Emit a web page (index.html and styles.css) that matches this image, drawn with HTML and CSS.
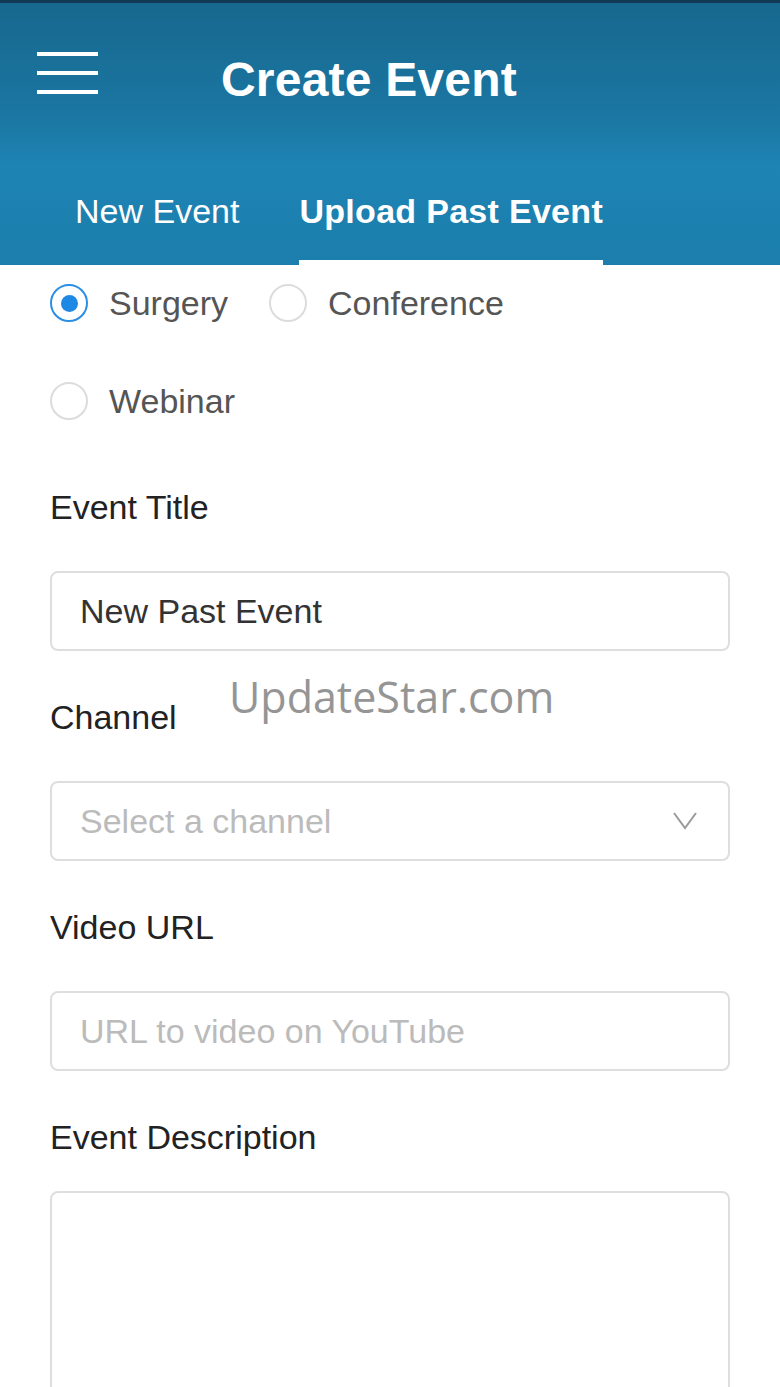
FILE: index.html
```html
<!DOCTYPE html>
<html lang="en">
<head>
    <meta charset="UTF-8">
    <meta name="viewport" content="width=device-width, initial-scale=1.0">
    <title>Create Event</title>
    <link rel="stylesheet" href="styles.css">
</head>
<body>
    <div class="header">
        <div class="title-bar">
            <div class="menu-icon">
                <span></span>
                <span></span>
                <span></span>
            </div>
            <h1 class="title">Create Event</h1>
        </div>
        <div class="tabs">
            <a href="#" class="tab">New Event</a>
            <a href="#" class="tab active">Upload Past Event</a>
        </div>
    </div>

    <div class="form">
        <div class="radio-group">
            <label class="radio-item">
                <span class="radio checked"></span>
                <span>Surgery</span>
            </label>
            <label class="radio-item">
                <span class="radio"></span>
                <span>Conference</span>
            </label>
            <label class="radio-item">
                <span class="radio"></span>
                <span>Webinar</span>
            </label>
        </div>

        <div class="field">
            <div class="field-label">Event Title</div>
            <div class="input">New Past Event</div>
        </div>

        <div class="field">
            <div class="field-label">Channel</div>
            <div class="input select">
                <span class="placeholder">Select a channel</span>
                <svg class="chevron" width="24" height="18" viewBox="0 0 24 18">
                    <path d="M1 1 L12 16 L23 1" fill="none" stroke="#9a9a9a" stroke-width="2"/>
                </svg>
            </div>
        </div>

        <div class="field">
            <div class="field-label">Video URL</div>
            <div class="input"><span class="placeholder">URL to video on YouTube</span></div>
        </div>

        <div class="field">
            <div class="field-label short">Event Description</div>
            <div class="input textarea"></div>
        </div>

        <div class="watermark">UpdateStar.com</div>
    </div>
</body>
</html>
```

FILE: styles.css
```css
body {
    font-family: 'Liberation Sans', Arial, sans-serif;
    margin: 0;
    padding: 0;
    background-color: #fff;
    height: 1387px;
    overflow: hidden;
}

/* Barra superior con degradado */
.header {
    height: 265px;
    border-top: 3px solid #123a55;
    box-sizing: border-box;
    background: linear-gradient(to bottom, #17688e 0%, #1b77a3 45%, #1e84b4 62%, #1b7eac 100%);
    color: #fff;
    display: flex;
    flex-direction: column;
}

.title-bar {
    display: flex;
    align-items: center;
    height: 152px;
    padding-left: 37px;
    box-sizing: border-box;
    padding-bottom: 0;
}

.menu-icon {
    display: flex;
    flex-direction: column;
    gap: 15px;
    width: 61px;
    margin-top: -12px;
}

.menu-icon span {
    display: block;
    height: 4px;
    background-color: #fff;
}

.title {
    margin: 0 0 0 123px;
    font-size: 48px;
    font-weight: bold;
    letter-spacing: 0.2px;
}

.tabs {
    display: flex;
    padding-left: 75px;
    gap: 60px;
    height: 110px;
    align-items: flex-end;
}

.tab {
    color: #fff;
    text-decoration: none;
    font-size: 34px;
    padding-bottom: 29px;
    border-bottom: 5px solid transparent;
    line-height: 40px;
}

.tab.active {
    font-weight: bold;
    letter-spacing: 0.3px;
    border-bottom-color: #fff;
}

/* Formulario */
.form {
    position: relative;
    padding: 9px 50px 0 50px;
}

.radio-group {
    display: flex;
    flex-wrap: wrap;
    column-gap: 41px;
    row-gap: 40px;
    max-width: 560px;
}

.radio-item {
    display: flex;
    align-items: center;
    gap: 21px;
    height: 58px;
    font-size: 34px;
    color: #555;
}

.radio {
    width: 34px;
    height: 34px;
    border: 2px solid #dcdcdc;
    border-radius: 50%;
    display: flex;
    align-items: center;
    justify-content: center;
}

.radio.checked {
    border-color: #2b8ee6;
}

.radio.checked::after {
    content: "";
    width: 17px;
    height: 17px;
    border-radius: 50%;
    background-color: #1e88e5;
}

.field {
    margin-top: 46px;
}

.radio-group + .field {
    margin-top: 57px;
}

.field-label {
    font-size: 34px;
    line-height: 40px;
    color: #222;
    margin-bottom: 44px;
}

.field-label.short {
    margin-bottom: 34px;
}

.input {
    height: 80px;
    box-sizing: border-box;
    border: 2px solid #dedede;
    border-radius: 8px;
    padding: 0 28px;
    display: flex;
    align-items: center;
    font-size: 34px;
    color: #333;
}

.placeholder {
    color: #bbb;
}

.select {
    justify-content: space-between;
}

.chevron {
    margin-right: 3px;
}

.textarea {
    height: 260px;
}

/* Marca de agua */
.watermark {
    position: absolute;
    top: 402px;
    left: 229px;
    font-family: 'Open Sans', sans-serif;
    font-size: 43px;
    color: #8a8a8a;
    opacity: 0.9;
}
```
